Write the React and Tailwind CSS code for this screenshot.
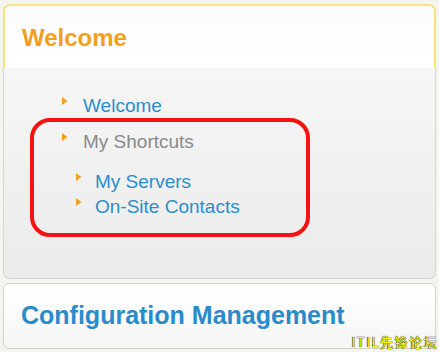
const Arrow = () => (
  <svg width="6" height="8" viewBox="0 0 6 8" className="shrink-0">
    <polygon points="0,0 5.5,4 0,8" fill="#f0a020" />
  </svg>
);

function Link({ label, indent, color = "text-[#2b8ecb]", className = "" }) {
  return (
    <div className={`relative flex h-[25px] items-center leading-[25px] ${className}`}>
      <span className={`absolute top-[4px] ${indent ? "left-[-19px]" : "left-[-21px]"}`}>
        <Arrow />
      </span>
      <span className={color}>{label}</span>
    </div>
  );
}

export default function App() {
  return (
    <div className="relative h-[352px] w-[439px] overflow-hidden bg-[#f5f5f0] font-['Liberation_Sans',Arial,sans-serif]">
      {/* Welcome panel */}
      <div className="ml-[3px] mt-[4px] w-[433px]">
        <div className="h-[64px] rounded-t-[7px] border-2 border-b-0 border-[#f7e37c] bg-gradient-to-b from-[#fcfcfc] to-[#ffffff] pl-[17px] pt-[18px]">
          <h2 className="text-[24px] font-bold leading-[28px] text-[#f0a01c]">Welcome</h2>
        </div>
        <div className="h-[211px] rounded-b-[6px] border border-t-0 border-[#d6d6d2] bg-gradient-to-b from-[#f6f6f6] to-[#ebebeb] pl-[79px] pt-[25px] text-[19px]">
          <Link label="Welcome" />
          <Link label="My Shortcuts" color="text-[#8a8a8a]" className="mt-[11px]" />
          <div className="mt-[15px] pl-[12px]">
            <Link label="My Servers" indent />
            <Link label="On-Site Contacts" indent />
          </div>
        </div>
      </div>

      {/* Configuration Management panel */}
      <div className="ml-[3px] mt-[4px] h-[66px] w-[433px] rounded-[6px] border border-[#d2d2ce] bg-gradient-to-b from-[#ffffff] to-[#f6f6f6] pl-[17px] pt-[16px]">
        <h2 className="text-[25px] font-bold leading-[30px] text-[#2a8bcb]">Configuration Management</h2>
      </div>

      {/* annotation */}
      <div className="pointer-events-none absolute left-[30px] top-[118px] h-[119px] w-[280px] rounded-[20px] border-4 border-[#f51212]" />

      {/* watermark */}
      <div className="absolute bottom-[2px] right-[1px] text-[13px] leading-[16px] tracking-[1.5px] text-[#ffff00] font-['Noto_Sans_CJK_SC',sans-serif] [text-shadow:0_0_1px_#000,0_0_1px_#000]">
        ITIL先锋论坛
      </div>
    </div>
  );
}
